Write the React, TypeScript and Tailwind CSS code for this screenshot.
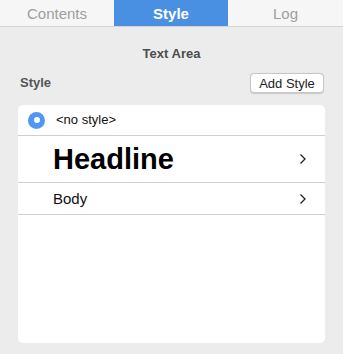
import { useState } from 'react'

type Tab = 'contents' | 'style' | 'log'

function Chevron() {
  return (
    <svg width="8" height="12" viewBox="0 0 8 12" className="shrink-0">
      <path d="M1.5 1.5 L6 6 L1.5 10.5" fill="none" stroke="#222" strokeWidth="1.3" />
    </svg>
  )
}

export default function App() {
  const [activeTab, setActiveTab] = useState<Tab>('style')
  const [selected, setSelected] = useState('none')

  const tabs = [
    { id: 'contents', label: 'Contents' },
    { id: 'style', label: 'Style' },
    { id: 'log', label: 'Log' },
  ]

  return (
    <div
      className="w-[343px] h-[354px] bg-[#ececec] flex flex-col overflow-hidden"
      style={{ fontFamily: '"Liberation Sans", Arial, sans-serif' }}
    >
      {/* Tab bar */}
      <div className="flex h-[27px] bg-[#f6f6f6] border-b border-[#d4d4d4] shrink-0">
        {tabs.map((t) => (
          <button
            key={t.id}
            onClick={() => setActiveTab(t.id as Tab)}
            className={`w-[114px] last:w-[115px] h-[26px] text-[15px] leading-none ${
              activeTab === t.id ? 'bg-[#4a90e2] text-white font-bold' : 'text-[#9e9e9e]'
            }`}
          >
            {t.label}
          </button>
        ))}
      </div>

      <div className="text-center text-[13px] font-bold text-[#4d4d4d] mt-[20px] leading-none">Text Area</div>

      <div className="flex items-center justify-between pl-[20px] pr-[19px] mt-[13px]">
        <span className="text-[13px] font-bold text-[#555]">Style</span>
        <button className="h-[20px] w-[74px] bg-white border border-[#c8c8c8] rounded-[4px] text-[13px] text-[#222] leading-none shadow-[0_0.5px_1px_rgba(0,0,0,0.15)]">
          Add Style
        </button>
      </div>

      {/* Style list */}
      <div className="mx-[18px] mt-[12px] h-[238px] bg-white rounded-[5px] flex flex-col">
        <div
          className="h-[31px] flex items-center pl-[10px] border-b border-[#cfcfcf] cursor-pointer"
          onClick={() => setSelected('none')}
        >
          <span
            className={`w-[17px] h-[17px] rounded-full flex items-center justify-center ${
              selected === 'none' ? 'bg-[#5096f5]' : 'border border-[#bbb]'
            }`}
          >
            <span className="w-[6px] h-[6px] rounded-full bg-white" />
          </span>
          <span className="ml-[11px] text-[13px] text-[#111]">&lt;no style&gt;</span>
        </div>
        <div
          className="h-[47px] flex items-center justify-between pl-[35px] pr-[18px] border-b border-[#cfcfcf] cursor-pointer"
          onClick={() => setSelected('headline')}
        >
          <span className="text-[29px] font-bold text-black leading-none">Headline</span>
          <Chevron />
        </div>
        <div
          className="h-[32px] flex items-center justify-between pl-[35px] pr-[18px] border-b border-[#cfcfcf] cursor-pointer"
          onClick={() => setSelected('body')}
        >
          <span className="text-[15px] text-[#111] leading-none">Body</span>
          <Chevron />
        </div>
      </div>
    </div>
  )
}
